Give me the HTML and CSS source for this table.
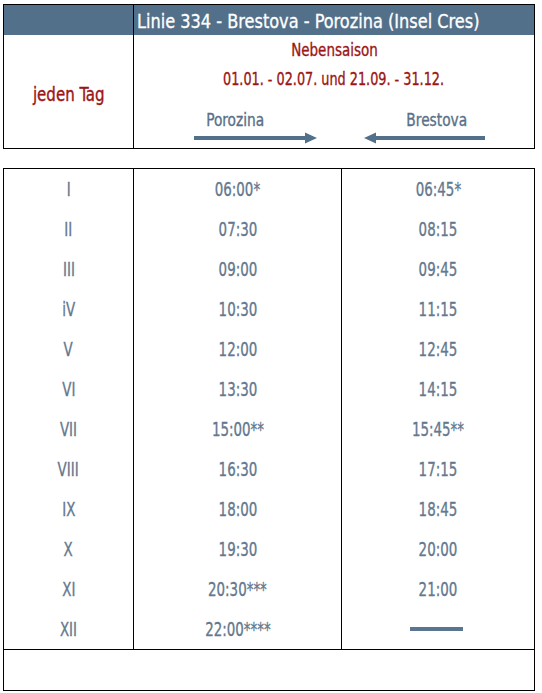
FILE: index.html
```html
<!DOCTYPE html>
<html lang="de">
<head>
<meta charset="utf-8">
<title>Linie 334 - Brestova - Porozina</title>
<link rel="stylesheet" href="styles.css">
</head>
<body>
<div class="page">
  <section class="info">
    <div class="info-head-left"></div>
    <div class="info-head-title"><span class="title-text">Linie 334 - Brestova - Porozina (Insel Cres)</span></div>
    <div class="info-days"><span class="n">jeden Tag</span></div>
    <div class="info-main">
      <div class="season"><span class="n">Nebensaison</span></div>
      <div class="dates"><span class="n">01.01. - 02.07. und 21.09. - 31.12.</span></div>
      <div class="dirs">
        <div class="dir dir-to">
          <div class="dir-label"><span class="n">Porozina</span></div>
          <svg class="arrow" width="123" height="12" viewBox="0 0 123 12"><rect x="0" y="4" width="112" height="4" fill="#52708a"/><polygon points="111,0.5 123,6 111,11.5" fill="#52708a"/></svg>
        </div>
        <div class="dir dir-from">
          <div class="dir-label"><span class="n">Brestova</span></div>
          <svg class="arrow" width="121" height="12" viewBox="0 0 121 12"><rect x="10" y="4" width="111" height="4" fill="#52708a"/><polygon points="0,6 12,0.5 12,11.5" fill="#52708a"/></svg>
        </div>
      </div>
    </div>
  </section>

  <section class="times">
    <div class="grid">
      <div class="c1"><span class="n">I</span></div><div class="c2"><span class="n">06:00*</span></div><div class="c3"><span class="n">06:45*</span></div>
      <div class="c1"><span class="n">II</span></div><div class="c2"><span class="n">07:30</span></div><div class="c3"><span class="n">08:15</span></div>
      <div class="c1"><span class="n">III</span></div><div class="c2"><span class="n">09:00</span></div><div class="c3"><span class="n">09:45</span></div>
      <div class="c1"><span class="n">iV</span></div><div class="c2"><span class="n">10:30</span></div><div class="c3"><span class="n">11:15</span></div>
      <div class="c1"><span class="n">V</span></div><div class="c2"><span class="n">12:00</span></div><div class="c3"><span class="n">12:45</span></div>
      <div class="c1"><span class="n">VI</span></div><div class="c2"><span class="n">13:30</span></div><div class="c3"><span class="n">14:15</span></div>
      <div class="c1"><span class="n">VII</span></div><div class="c2"><span class="n">15:00**</span></div><div class="c3"><span class="n">15:45**</span></div>
      <div class="c1"><span class="n">VIII</span></div><div class="c2"><span class="n">16:30</span></div><div class="c3"><span class="n">17:15</span></div>
      <div class="c1"><span class="n">IX</span></div><div class="c2"><span class="n">18:00</span></div><div class="c3"><span class="n">18:45</span></div>
      <div class="c1"><span class="n">X</span></div><div class="c2"><span class="n">19:30</span></div><div class="c3"><span class="n">20:00</span></div>
      <div class="c1"><span class="n">XI</span></div><div class="c2"><span class="n">20:30***</span></div><div class="c3"><span class="n">21:00</span></div>
      <div class="c1"><span class="n">XII</span></div><div class="c2"><span class="n">22:00****</span></div><div class="c3"><span class="dash"></span></div>
    </div>
    <div class="foot"></div>
  </section>
</div>
</body>
</html>
```

FILE: styles.css
```css
html, body {
  margin: 0;
  padding: 0;
  background: #ffffff;
}

body {
  font-family: "DejaVu Sans Condensed", "DejaVu Sans", sans-serif;
  font-stretch: condensed;
  -webkit-font-smoothing: antialiased;
}

.page {
  padding: 4px 0 0 3px;
}

.n {
  display: inline-block;
  white-space: nowrap;
  transform-origin: center center;
  -webkit-text-stroke: 0.35px currentColor;
}

.info {
  box-sizing: border-box;
  width: 532px;
  height: 145px;
  border: 1px solid #000;
  display: grid;
  grid-template-columns: 130px 1fr;
  grid-template-rows: 30px 1fr;
}

.info-head-left {
  background: #53708a;
  border-right: 1px solid #000;
}

.info-head-title {
  background: #53708a;
  color: #ffffff;
  font-size: 19px;
  line-height: 27px;
  padding: 3px 0 0 3px;
  white-space: nowrap;
}

.title-text {
  display: inline-block;
  transform: scaleX(0.945);
  transform-origin: left center;
  -webkit-text-stroke: 0.3px currentColor;
}

.info-days {
  border-right: 1px solid #000;
  color: #9b1515;
  font-size: 19px;
  display: flex;
  align-items: center;
  justify-content: center;
  padding-top: 4px;
}

.info-days .n {
  transform: scaleX(0.88);
}

.info-main {
  display: flex;
  flex-direction: column;
  align-items: center;
  padding-top: 2px;
}

.season {
  color: #9b1515;
  font-size: 18.5px;
  line-height: 26px;
}

.season .n {
  transform: scaleX(0.81);
}

.dates {
  color: #9b1515;
  font-size: 18.5px;
  line-height: 32px;
}

.dates .n {
  transform: scaleX(0.77);
}

.dirs {
  align-self: stretch;
  display: flex;
  padding-left: 60px;
  gap: 47px;
  margin-top: 14px;
}

.dir {
  display: flex;
  flex-direction: column;
}

.dir-label {
  color: #5a7089;
  font-size: 18px;
  line-height: 22px;
}

.dir-label .n {
  transform: scaleX(0.85);
}

.dir-to .dir-label {
  padding-left: 7px;
}

.dir-from .dir-label {
  text-align: right;
  padding-right: 12px;
}

.arrow {
  display: block;
  margin-top: 1px;
}

.times {
  box-sizing: border-box;
  width: 532px;
  margin-top: 19px;
  border: 1px solid #000;
}

.grid {
  display: grid;
  grid-template-columns: 130px 208px 1fr;
  grid-auto-rows: 40px;
}

.c1, .c2, .c3 {
  color: #64788e;
  font-size: 20px;
  line-height: 40px;
  text-align: center;
}

.c1 .n, .c2 .n, .c3 .n {
  transform: scaleX(0.745);
}

.c1, .c2 {
  border-right: 1px solid #000;
}

.c3 {
  display: flex;
  align-items: center;
  justify-content: center;
}

.dash {
  display: block;
  width: 53px;
  height: 4px;
  background: #5a7590;
  margin-left: -4px;
}

.foot {
  height: 40px;
  border-top: 1px solid #000;
}
```
